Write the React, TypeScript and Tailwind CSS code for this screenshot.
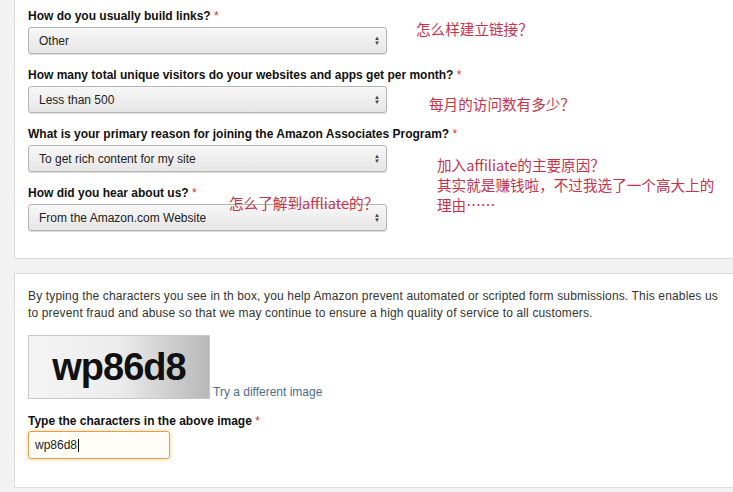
import React from "react";

const font = { fontFamily: '"Liberation Sans", Arial, sans-serif' };
const cjk = { fontFamily: '"Noto Sans CJK SC", "Liberation Sans", sans-serif' };

function Sel({ value }: { value: string }) {
  return (
    <div className="flex h-[27px] w-[359px] items-center justify-between rounded-[3px] border border-[#b4b4b4] bg-gradient-to-b from-[#f7f7f7] to-[#e6e6e6] pl-[10px] pr-[6px] text-[12px] text-[#222] shadow-[0_1px_0_#ddd]">
      <span>{value}</span>
      <span className="flex flex-col items-center text-[6px] leading-[5px] text-[#444]">
        <span>▲</span>
        <span>▼</span>
      </span>
    </div>
  );
}

function Label({ children }: { children: React.ReactNode }) {
  return (
    <div className="text-[12px] font-bold leading-[14px] text-[#111]">
      {children} <span className="font-normal text-[#c33]">*</span>
    </div>
  );
}

function Note({ children, className }: { children: React.ReactNode; className: string }) {
  return (
    <div className={"absolute text-[14.6px] leading-[20px] text-[#c8324a] " + className} style={cjk}>
      {children}
    </div>
  );
}

export default function App() {
  return (
    <div className="h-[492px] w-[733px] overflow-hidden bg-[#f2f2f2]" style={font}>
      <div className="relative ml-[14px] h-[259px] border-b border-l border-[#dcdcdc] bg-white pl-[13px] pt-[9px]">
        <div className="flex flex-col">
          <Label>How do you usually build links?</Label>
          <div className="mt-[4px]"><Sel value="Other" /></div>
          <div className="mt-[14px]"><Label>How many total unique visitors do your websites and apps get per month?</Label></div>
          <div className="mt-[4px]"><Sel value="Less than 500" /></div>
          <div className="mt-[14px]"><Label>What is your primary reason for joining the Amazon Associates Program?</Label></div>
          <div className="mt-[4px]"><Sel value="To get rich content for my site" /></div>
          <div className="mt-[14px]"><Label>How did you hear about us?</Label></div>
          <div className="mt-[4px]"><Sel value="From the Amazon.com Website" /></div>
        </div>
        <Note className="left-[401px] top-[19px]">怎么样建立链接？</Note>
        <Note className="left-[414px] top-[94px]">每月的访问数有多少？</Note>
        <Note className="left-[422px] top-[155px]">
          加入affiliate的主要原因？<br />其实就是赚钱啦，不过我选了一个高大上的<br />理由……
        </Note>
        <Note className="left-[214px] top-[193px]">怎么了解到affliate的？</Note>
      </div>
      <div className="ml-[14px] mt-[14px] h-[215px] border-b border-l border-t border-[#dcdcdc] bg-white pl-[13px] pt-[14px]">
        <p className="w-[692px] text-[12px] leading-[17px] tracking-[0.15px] text-[#333]">
          By typing the characters you see in th box, you help Amazon prevent automated or scripted form submissions. This enables us<br />to prevent fraud and abuse so that we may continue to ensure a high quality of service to all customers.
        </p>
        <div className="mt-[13px] flex items-end">
          <div className="flex h-[64px] w-[182px] items-center justify-center border border-[#c8c8c8] bg-gradient-to-r from-[#f4f4f4] via-[#ececec] to-[#b8b8b8]">
            <span className="text-[38px] font-bold tracking-[-1px] text-[#111]">wp86d8</span>
          </div>
          <span className="-mb-[2px] ml-[3px] text-[12px] text-[#4a6e8e]">Try a different image</span>
        </div>
        <div className="mt-[15px]"><Label>Type the characters in the above image</Label></div>
        <div className="mt-[3px] flex h-[28px] w-[142px] items-center rounded-[3px] border border-[#e0a050] bg-[#fffdf8] pl-[6px] text-[12px] text-[#222] shadow-[0_0_4px_#f3c77a]">
          wp86d8<span className="ml-[1px] h-[13px] w-px bg-black" />
        </div>
      </div>
    </div>
  );
}
